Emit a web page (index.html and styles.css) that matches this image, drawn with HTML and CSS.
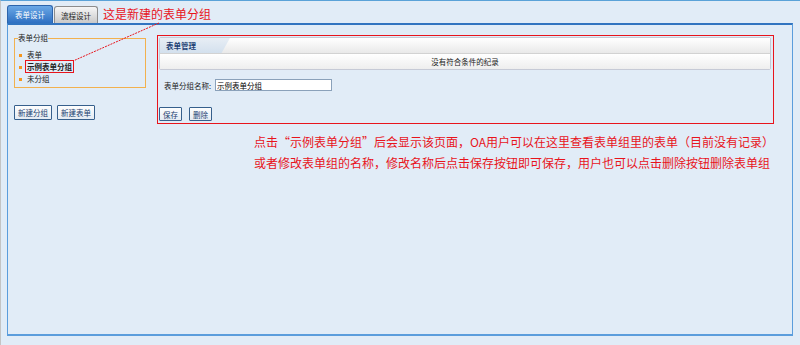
FILE: index.html
```html
<!DOCTYPE html>
<html lang="zh-CN">
<head>
    <meta charset="UTF-8">
    <title>表单设计</title>
    <link rel="stylesheet" href="styles.css">
</head>
<body>
    <div class="page">
        <div class="tabbar">
            <span class="tab active">表单设计</span>
            <span class="tab">流程设计</span>
            <span class="note note-top">这是新建的表单分组</span>
        </div>

        <div class="panel">
            <div class="side">
                <fieldset class="group">
                    <legend>表单分组</legend>
                    <ul class="group-list">
                        <li>表单</li>
                        <li><span class="current">示例表单分组</span></li>
                        <li>未分组</li>
                    </ul>
                </fieldset>
                <div class="side-buttons">
                    <button class="btn">新建分组</button>
                    <button class="btn">新建表单</button>
                </div>
            </div>

            <div class="main">
                <div class="mark">
                    <div class="grid">
                        <div class="grid-head"><span class="grid-title">表单管理</span></div>
                        <div class="grid-empty">没有符合条件的纪录</div>
                    </div>
                    <div class="form-row">
                        <label for="group_name">表单分组名称:</label>
                        <input type="text" id="group_name" value="示例表单分组">
                    </div>
                    <div class="form-buttons">
                        <button class="btn">保存</button>
                        <button class="btn">删除</button>
                    </div>
                </div>
                <div class="note note-help">
                    <p>点击“示例表单分组”后会显示该页面，OA用户可以在这里查看表单组里的表单（目前没有记录）</p>
                    <p>或者修改表单组的名称，修改名称后点击保存按钮即可保存，用户也可以点击删除按钮删除表单组</p>
                </div>
            </div>
        </div>

        <!-- pointer from the top note to the new group -->
        <svg class="pointer" width="800" height="345">
            <line x1="158" y1="22" x2="72" y2="60" stroke="#e8141c" stroke-width="1" stroke-dasharray="2 1"/>
        </svg>
    </div>
</body>
</html>
```

FILE: styles.css
```css
body {
    margin: 0;
    background-color: #e1ecf7;
    font-family: "Noto Sans CJK SC", "DejaVu Sans", sans-serif;
    font-size: 7.5px;
    color: #222;
}
.page {
    position: relative;
    height: 345px;
    box-sizing: border-box;
    border-top: 1px solid #5aa2d8;
    border-left: 1px solid #c4c4c4;
    padding: 4px 0 0 6px;
}
.tabbar {
    display: flex;
    align-items: flex-end;
    height: 18px;
}
.tab {
    display: flex;
    align-items: center;
    justify-content: center;
    width: 44px;
    height: 17px;
    box-sizing: border-box;
    border: 1px solid #8c8c8c;
    border-bottom: none;
    border-radius: 3px 3px 0 0;
    background: linear-gradient(#f6f6f6, #c9c9c9);
    color: #1e1e1e;
    margin-right: 1px;
}
.tab.active {
    width: 46px;
    height: 18px;
    border-color: #2c64ac;
    background: linear-gradient(#6aa8e6, #2f70c2);
    color: #fff;
}
.note {
    color: #e8141c;
}
.note-top {
    font-size: 12px;
    line-height: 16px;
    margin: 0 0 1px 4px;
}
.panel {
    display: flex;
    width: 786px;
    height: 313px;
    box-sizing: border-box;
    border: 1px solid #5b9ddc;
    border-top: 2px solid #3174c0;
    border-bottom: 2px solid #5b9ddc;
    padding: 8px 0 0 6px;
}
.side {
    width: 132px;
    margin-right: 10px;
}
.group {
    margin: 0;
    padding: 6px 0 3px 2px;
    height: 55px;
    box-sizing: border-box;
    border: 1px solid #f2b14e;
}
.group legend {
    padding: 0;
    margin-left: 1px;
    line-height: 10px;
}
.group-list {
    list-style: none;
    margin: 0;
    padding: 0;
}
.group-list li {
    position: relative;
    line-height: 12px;
    padding-left: 10px;
}
.group-list li::before {
    content: "";
    position: absolute;
    left: 2px;
    top: 5px;
    width: 3px;
    height: 3px;
    background-color: #f5961e;
}
.current {
    font-weight: bold;
    outline: 1px solid #e8141c;
    padding: 0 1px;
    margin-left: -1px;
}
.side-buttons {
    display: flex;
    gap: 5px;
    margin-top: 17px;
}
.btn {
    font-family: inherit;
    font-size: 7.5px;
    color: #1b3f70;
    height: 15px;
    padding: 0 3px;
    border: 1px solid #365f8c;
    border-radius: 1px;
    background: linear-gradient(#fdfdfd, #e4ebf3);
    line-height: 11px;
}
.main {
    display: flex;
    flex-direction: column;
}
.mark {
    width: 617px;
    height: 89px;
    box-sizing: border-box;
    border: 1px solid #e8141c;
    padding: 1px 2px 0 1px;
    margin: 2px 0 0 1px;
}
.grid {
    border: 1px solid #c6cad6;
    border-radius: 2px;
}
.grid-head {
    height: 15px;
    background: linear-gradient(#ffffff, #e9e9e9);
    border-bottom: 1px solid #d2d2d2;
}
.grid-title {
    display: inline-block;
    height: 15px;
    line-height: 16px;
    width: 64px;
    padding-left: 6px;
    font-weight: bold;
    color: #1c3f74;
    background: linear-gradient(#e8eef5, #d3e0ed);
    clip-path: polygon(0 0, 100% 0, 88% 100%, 0 100%);
}
.grid-empty {
    height: 15px;
    line-height: 15px;
    text-align: center;
    background: linear-gradient(#ffffff, #eeeeee);
}
.form-row {
    display: flex;
    align-items: center;
    margin: 9px 0 0 5px;
}
.form-row label {
    width: 51px;
}
.form-row input {
    width: 117px;
    height: 12px;
    box-sizing: border-box;
    padding: 0 1px;
    border: 1px solid #8aa1ba;
    font-family: inherit;
    font-size: 7.5px;
}
.form-buttons {
    display: flex;
    gap: 7px;
    margin-top: 16px;
}
.form-buttons .btn {
    height: 14px;
    padding: 0 3px;
}
.note-help {
    font-size: 12px;
    line-height: 21px;
    padding: 7px 0 0 98px;
}
.note-help p {
    margin: 0;
}
.pointer {
    position: absolute;
    left: 0;
    top: 0;
    pointer-events: none;
}
```
